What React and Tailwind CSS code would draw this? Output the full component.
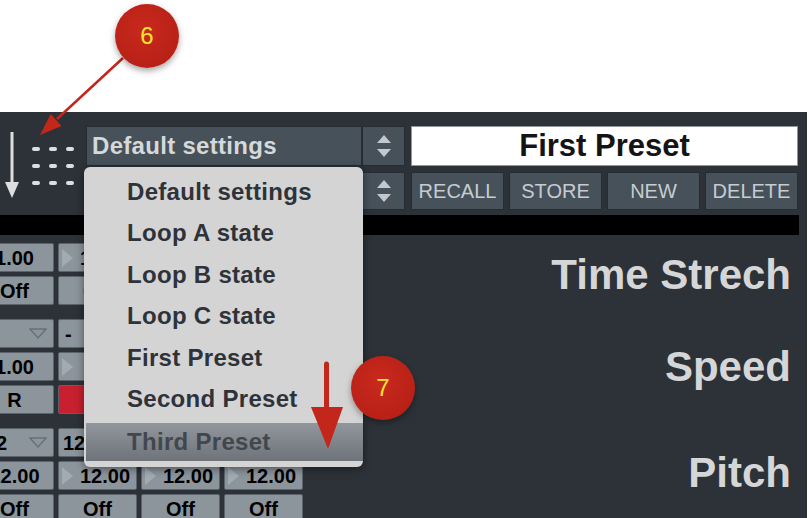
import React from "react";

const FONT = "font-['Liberation_Sans',Arial,Helvetica,sans-serif]";

// marcador triangular a la izquierda de las celdas numéricas
function Tri() {
  return (
    <svg width="12" height="20" viewBox="0 0 12 20" className="shrink-0 ml-[3px]">
      <polygon points="0,1 11,10 0,19" fill="#a3abb2" />
    </svg>
  );
}

function Caret() {
  return (
    <svg width="18" height="11" viewBox="0 0 18 11" className="shrink-0">
      <polygon points="1,1 17,1 9,10" fill="none" stroke="#65707a" strokeWidth="1.4" />
    </svg>
  );
}

function Cell({ children, tri, red, drop, pl = "" }) {
  if (red) {
    return <div className="w-[79px] h-[29px] shrink-0 rounded-[2px] border border-[#5b646c] bg-[#c9202f]" />;
  }
  if (drop) {
    return (
      <div
        className={`w-[79px] h-[29px] shrink-0 rounded-[2px] border border-[#5b646c] bg-[#8d959c] flex items-center justify-between pr-[6px] text-[20px] font-bold text-black ${pl}`}
      >
        <span>{children}</span>
        <Caret />
      </div>
    );
  }
  return (
    <div className="w-[79px] h-[29px] shrink-0 rounded-[2px] border border-[#5b646c] bg-[#8d959c] flex items-center text-[20px] font-bold text-black">
      {tri && <Tri />}
      <span className="flex-1 text-center leading-none">{children}</span>
    </div>
  );
}

function Spinner({ h }) {
  return (
    <div className={`w-[43px] ${h} shrink-0 border border-[#262c31] bg-[#46515a] flex flex-col items-center justify-center gap-[6px]`}>
      <svg width="14" height="8" viewBox="0 0 14 8">
        <polygon points="0,8 14,8 7,0" fill="#c3c8cc" />
      </svg>
      <svg width="14" height="8" viewBox="0 0 14 8">
        <polygon points="0,0 14,0 7,8" fill="#c3c8cc" />
      </svg>
    </div>
  );
}

const menuItems = [
  "Default settings",
  "Loop A state",
  "Loop B state",
  "Loop C state",
  "First Preset",
  "Second Preset",
];

export default function App() {
  return (
    <div className={`relative w-[809px] h-[518px] overflow-hidden bg-white ${FONT}`}>
      <div className="h-[112px]" />

      {/* panel */}
      <div className="w-[807px] h-[406px] bg-[#2c3238] flex flex-col">
        <div className="flex pt-[14px]">
          <div className="w-[86px] shrink-0">
            <svg width="86" height="84" viewBox="0 0 86 84">
              <rect x="10.5" y="6" width="3" height="54" fill="#dedede" />
              <polygon points="5,56 19,56 12,72" fill="#dedede" />
              {[21, 38, 55].map((y) =>
                [32, 49, 66].map((x) => (
                  <rect key={`${x}-${y}`} x={x} y={y} width="8" height="4" rx="2" fill="#dedede" />
                ))
              )}
            </svg>
          </div>
          <div className="flex flex-col gap-[6px]">
            <div className="flex">
              <div className="w-[276px] h-[40px] border border-[#262c31] bg-[#46515a] flex items-center pl-[5px] text-[24px] tracking-[0.3px] font-bold text-[#d6d8da]">
                Default settings
              </div>
              <Spinner h="h-[40px]" />
              <div className="ml-[6px] w-[387px] h-[40px] bg-white border border-[#8e959b] flex items-center justify-center text-[31px] font-bold text-[#141414]">
                First Preset
              </div>
            </div>
            <div className="flex">
              <div className="w-[276px] h-[38px] border border-[#262c31] bg-[#46515a]" />
              <Spinner h="h-[38px]" />
              <div className="ml-[6px] w-[387px] flex gap-[5px]">
                {["RECALL", "STORE", "NEW", "DELETE"].map((b) => (
                  <div
                    key={b}
                    className="flex-1 h-[38px] border border-[#262c31] bg-[#46515a] flex items-center justify-center text-[20px] text-[#c6ccd1]"
                  >
                    {b}
                  </div>
                ))}
              </div>
            </div>
          </div>
        </div>

        <div className="mt-[5px] w-[799px] h-[20px] bg-black shrink-0" />

        <div className="flex flex-1">
          <div className="-ml-[25px] pt-[8px] flex flex-col gap-[14px]">
            <div className="flex flex-col gap-[4px]">
              <div className="flex gap-[4px]">
                <Cell>1.00</Cell>
                <Cell tri>12.00</Cell>
                <Cell tri>12.00</Cell>
                <Cell tri>12.00</Cell>
              </div>
              <div className="flex gap-[4px]">
                <Cell>Off</Cell>
                <Cell>Off</Cell>
                <Cell>Off</Cell>
                <Cell>Off</Cell>
              </div>
            </div>
            <div className="flex flex-col gap-[4px]">
              <div className="flex gap-[4px]">
                <Cell drop pl="pl-[6px]"></Cell>
                <Cell drop pl="pl-[6px]">-</Cell>
                <Cell drop pl="pl-[6px]">-</Cell>
                <Cell drop pl="pl-[6px]">-</Cell>
              </div>
              <div className="flex gap-[4px]">
                <Cell>1.00</Cell>
                <Cell tri>1.00</Cell>
                <Cell tri>1.00</Cell>
                <Cell tri>1.00</Cell>
              </div>
              <div className="flex gap-[4px]">
                <Cell>R</Cell>
                <Cell red />
                <Cell red />
                <Cell red />
              </div>
            </div>
            <div className="flex flex-col gap-[4px]">
              <div className="flex gap-[4px]">
                <Cell drop pl="pl-[9px]">12</Cell>
                <Cell drop pl="pl-[4px]">12</Cell>
                <Cell drop pl="pl-[4px]">12</Cell>
                <Cell drop pl="pl-[4px]">12</Cell>
              </div>
              <div className="flex gap-[4px]">
                <Cell>12.00</Cell>
                <Cell tri>12.00</Cell>
                <Cell tri>12.00</Cell>
                <Cell tri>12.00</Cell>
              </div>
              <div className="flex gap-[4px]">
                <Cell>Off</Cell>
                <Cell>Off</Cell>
                <Cell>Off</Cell>
                <Cell>Off</Cell>
              </div>
            </div>
          </div>

          <div className="flex-1 flex flex-col items-end pr-[16px] text-[42px] leading-[42px] font-bold text-[#d5d6d7]">
            <div className="mt-[19px]">Time Strech</div>
            <div className="mt-[50px]">Speed</div>
            <div className="mt-[64px]">Pitch</div>
          </div>
        </div>
      </div>

      {/* menú desplegable abierto */}
      <div className="absolute left-[84px] top-[167px] w-[279px] h-[300px] rounded-[6px] bg-[#d4d4d4] shadow-[0_2px_8px_rgba(0,0,0,0.45)] pt-[4px] flex flex-col">
        {menuItems.map((m) => (
          <div key={m} className="h-[41.5px] flex items-center pl-[43px] text-[24px] tracking-[0.3px] font-bold text-[#2e333a]">
            {m}
          </div>
        ))}
        <div className="mt-[3px] ml-[2px] h-[38px] flex items-center pl-[41px] text-[24px] tracking-[0.3px] font-bold text-[#42474d] bg-[linear-gradient(to_bottom,#92979d,#6e737a)]">
          Third Preset
        </div>
      </div>

      {/* anotaciones */}
      <svg className="absolute inset-0 pointer-events-none" width="809" height="518" viewBox="0 0 809 518">
        <line x1="123" y1="58" x2="57" y2="119" stroke="#c3261b" strokeWidth="2.5" />
        <polygon points="40,135 61.5,125.9 50.7,114.1" fill="#c3261b" />
        <line x1="326.5" y1="364" x2="326.5" y2="410" stroke="#c3261b" strokeWidth="5" strokeLinecap="round" />
        <polygon points="311,407 343,407 328,449" fill="#c3261b" />
      </svg>
      <div className="absolute left-[115px] top-[4px] w-[64px] h-[64px] rounded-full bg-[radial-gradient(circle_at_45%_40%,#c9291d,#b21d14)] shadow-[0_3px_6px_rgba(0,0,0,0.35)] flex items-center justify-center text-[24px] text-[#f6e630]">
        6
      </div>
      <div className="absolute left-[351px] top-[356px] w-[64px] h-[64px] rounded-full bg-[radial-gradient(circle_at_45%_40%,#c9291d,#b21d14)] shadow-[0_3px_6px_rgba(0,0,0,0.35)] flex items-center justify-center text-[24px] text-[#f6e630]">
        7
      </div>
    </div>
  );
}
